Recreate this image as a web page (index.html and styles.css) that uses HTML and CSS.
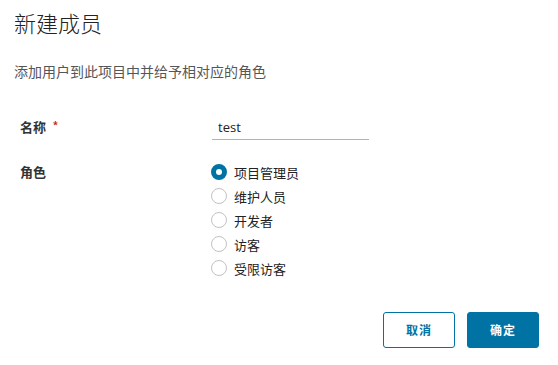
FILE: index.html
```html
<!DOCTYPE html>
<html lang="zh-CN">
<head>
<meta charset="utf-8">
<title>新建成员</title>
<link rel="stylesheet" href="styles.css">
</head>
<body>
<div class="modal">
  <h1 class="title">新建成员</h1>
  <p class="desc">添加用户到此项目中并给予相对应的角色</p>
  <div class="form">
    <div class="row row-name">
      <div class="label">名称<span class="req">*</span></div>
      <div class="control"><input class="input" type="text" value="test"></div>
    </div>
    <div class="row row-role">
      <div class="label label-role">角色</div>
      <div class="radios">
        <label class="radio-row"><span class="radio checked"></span><span class="radio-text">项目管理员</span></label>
        <label class="radio-row"><span class="radio"></span><span class="radio-text">维护人员</span></label>
        <label class="radio-row"><span class="radio"></span><span class="radio-text">开发者</span></label>
        <label class="radio-row"><span class="radio"></span><span class="radio-text">访客</span></label>
        <label class="radio-row"><span class="radio"></span><span class="radio-text">受限访客</span></label>
      </div>
    </div>
  </div>
  <div class="footer">
    <button class="btn btn-outline">取消</button>
    <button class="btn btn-primary">确定</button>
  </div>
</div>
</body>
</html>
```
FILE: styles.css
```css
* { box-sizing: border-box; }
html, body { margin: 0; padding: 0; background: #fff; }
body {
  font-family: "Noto Sans", "Noto Sans CJK SC", sans-serif;
  color: #333;
}
.modal {
  width: 558px;
  padding: 10px 19px 0 14px;
}
.title {
  margin: 0;
  font-size: 22px;
  line-height: 26px;
  font-weight: 300;
  color: #222;
}
.desc {
  margin: 26px 0 0;
  font-size: 14px;
  line-height: 20px;
  color: #565656;
}
.form { display: flex; flex-direction: column; }
.row { display: flex; }
.row-name { margin-top: 33px; height: 25px; }
.row-role { margin-top: 20px; }
.label {
  width: 198px;
  padding-left: 6px;
  font-size: 13px;
  font-weight: 700;
  line-height: 25px;
  color: #333;
}
.label-role { line-height: 24px; }
.req {
  color: #c92100;
  font-size: 9px;
  margin-left: 7px;
  vertical-align: top;
  line-height: 20px;
}
.control { display: flex; }
.input {
  width: 157px;
  height: 25px;
  border: none;
  border-bottom: 1px solid #b3b3b3;
  padding: 0 0 0 6px;
  margin: 0;
  font-family: "Open Sans", "Noto Sans CJK SC", sans-serif;
  font-size: 13px;
  color: #222;
  outline: none;
  background: transparent;
}
.radios { display: flex; flex-direction: column; }
.radio-row {
  display: flex;
  align-items: center;
  height: 24px;
  gap: 7px;
  margin-left: -1px;
}
.radio {
  width: 16px;
  height: 16px;
  border-radius: 50%;
  border: 1px solid #c2c2c2;
  background: #fff;
  flex: none;
}
.radio.checked {
  border: 5px solid #0072a3;
  background: #fff;
}
.radio-text {
  font-size: 13px;
  color: #222;
}
.footer {
  display: flex;
  justify-content: flex-end;
  gap: 12px;
  margin-top: 32px;
}
.btn {
  width: 72px;
  height: 36px;
  border-radius: 3px;
  font-family: "Noto Sans", "Noto Sans CJK SC", sans-serif;
  font-size: 12px;
  font-weight: 700;
  letter-spacing: 1px;
  padding: 0;
  cursor: pointer;
}
.btn-outline {
  background: #fff;
  border: 1px solid #0072a3;
  color: #0072a3;
}
.btn-primary {
  background: #0072a3;
  border: 1px solid #0072a3;
  color: #fff;
}
```
